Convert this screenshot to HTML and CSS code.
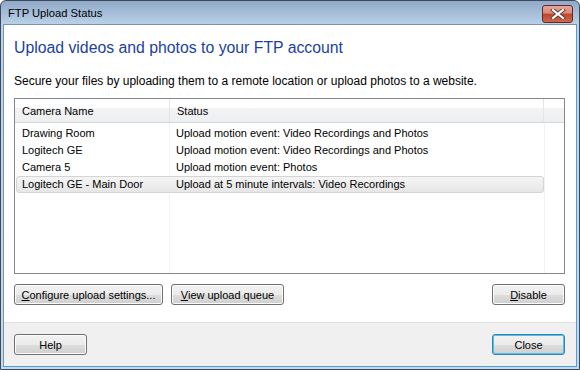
FILE: index.html
```html
<!DOCTYPE html>
<html lang="en">
<head>
  <meta charset="UTF-8" />
  <title>FTP Upload Status</title>
  <link rel="stylesheet" href="styles.css">
</head>
<body>
<div class="window">
  <div class="titlebar">
    <span class="title">FTP Upload Status</span>
    <div class="close-x">
      <svg width="16" height="10" viewBox="0 0 16 10"><path d="M3 1 L13 9 M13 1 L3 9" stroke="#5a3a3a" stroke-width="4" stroke-linecap="square"/><path d="M3 1 L13 9 M13 1 L3 9" stroke="#fff" stroke-width="2.2" stroke-linecap="square"/></svg>
    </div>
  </div>
  <div class="client">
    <div class="main">
      <h1 class="instruction">Upload videos and photos to your FTP account</h1>
      <p class="desc">Secure your files by uploading them to a remote location or upload photos to a website.</p>
      <div class="listview">
        <div class="lv-head">
          <div class="col-name">Camera Name</div>
          <div class="col-status">Status</div>
          <div class="col-rest"></div>
        </div>
        <div class="lv-body">
          <div class="row"><div class="col-name">Drawing Room</div><div class="col-status">Upload motion event: Video Recordings and Photos</div></div>
          <div class="row"><div class="col-name">Logitech GE</div><div class="col-status">Upload motion event: Video Recordings and Photos</div></div>
          <div class="row"><div class="col-name">Camera 5</div><div class="col-status">Upload motion event: Photos</div></div>
          <div class="row selected"><div class="col-name">Logitech GE - Main Door</div><div class="col-status">Upload at 5 minute intervals: Video Recordings</div></div>
        </div>
      </div>
      <div class="actions">
        <button class="btn btn-configure"><u>C</u>onfigure upload settings...</button>
        <button class="btn btn-queue"><u>V</u>iew upload queue</button>
        <span class="spacer"></span>
        <button class="btn btn-wide"><u>D</u>isable</button>
      </div>
    </div>
    <div class="footer">
      <button class="btn btn-wide">Help</button>
      <span class="spacer"></span>
      <button class="btn btn-wide default">Close</button>
    </div>
  </div>
</div>
</body>
</html>
```

FILE: styles.css
```css
body { margin: 0; font-family: "Liberation Sans", Arial, sans-serif; font-size: 12px; color: #000; }
.window { width: 580px; height: 370px; box-sizing: border-box; border: 1px solid #3c4a5c; border-radius: 6px 6px 0 0; background: linear-gradient(#8fa9c7, #bcd2ea 24px, #c5d9ee); display: flex; flex-direction: column; padding: 0 2px 2px 2px; }
.titlebar { height: 23px; display: flex; align-items: center; padding: 0 4px 0 5px; }
.title { flex: 1; font-size: 11.2px; padding-top: 1px; }
.close-x { width: 29px; height: 16px; margin-top: 3px; border: 1px solid #5c2a36; border-radius: 3px; background: linear-gradient(#e8a493, #d88a78 45%, #c0442a 50%, #cf6a4c); display: flex; align-items: center; justify-content: center; }
.close-x svg { display: block; }
.client { flex: 1; background: #fff; display: flex; flex-direction: column; border: 1px solid #7a93ad; border-bottom-color: #4aa0d8; border-right-color: #4aa0d8; }
.main { flex: 1; padding: 0 11px 0 10px; display: flex; flex-direction: column; }
.instruction { margin: 14px 0 0 0; font-size: 15.8px; font-weight: normal; color: #1b3fa3; }
.desc { margin: 17px 0 0 0; }
.listview { margin-top: 10px; height: 174px; border: 1px solid #828790; display: flex; flex-direction: column; font-size: 11px; }
.lv-head { height: 23px; display: flex; background: linear-gradient(#fff, #fff 38%, #f3f3f4 40%, #eeeff1); border-bottom: 1px solid #d5d5d5; }
.lv-head > div { border-right: 1px solid #e3e5e8; line-height: 25px; }
.col-name { width: 147px; padding-left: 7px; }
.col-status { width: 366px; padding-left: 7px; }
.col-rest { flex: 1; border-right: none !important; }
.lv-body { flex: 1; padding-top: 2px; background: linear-gradient(90deg, transparent 154px, #eef3fa 154px, #eef3fa 155px, transparent 155px, transparent 529px, #eef3fa 529px, #eef3fa 530px, transparent 530px); }
.row { display: flex; height: 17px; line-height: 17px; width: 528px; margin-left: 1px; box-sizing: border-box; }
.row .col-name { width: 148px; padding-left: 6px; }
.row .col-status { padding-left: 6px; }
.row.selected { border: 1px solid #d4d4d4; border-radius: 3px; background: linear-gradient(#f5f5f5, #e6e6e6); line-height: 15px; }
.row.selected .col-name { padding-left: 5px; }
.actions { display: flex; margin-top: 10px; gap: 8px; }
.spacer { flex: 1; }
.btn { height: 21px; padding: 0; font-family: inherit; font-size: 11px; color: #000; border: 1px solid #707070; border-radius: 3px; background: linear-gradient(#f2f2f2, #ebebeb 50%, #dddddd 51%, #cfcfcf); box-shadow: inset 0 0 0 1px #fcfcfc; }
.btn-configure { width: 149px; }
.btn-queue { width: 113px; }
.btn-wide { width: 73px; }
.btn.default { border-color: #3c7fb1; box-shadow: inset 0 0 0 1px #48c5f1; }
.footer { height: 43px; margin-top: 17px; background: #f0f0f0; border-top: 1px solid #dfdfdf; display: flex; align-items: center; padding: 0 11px 0 10px; }
```
